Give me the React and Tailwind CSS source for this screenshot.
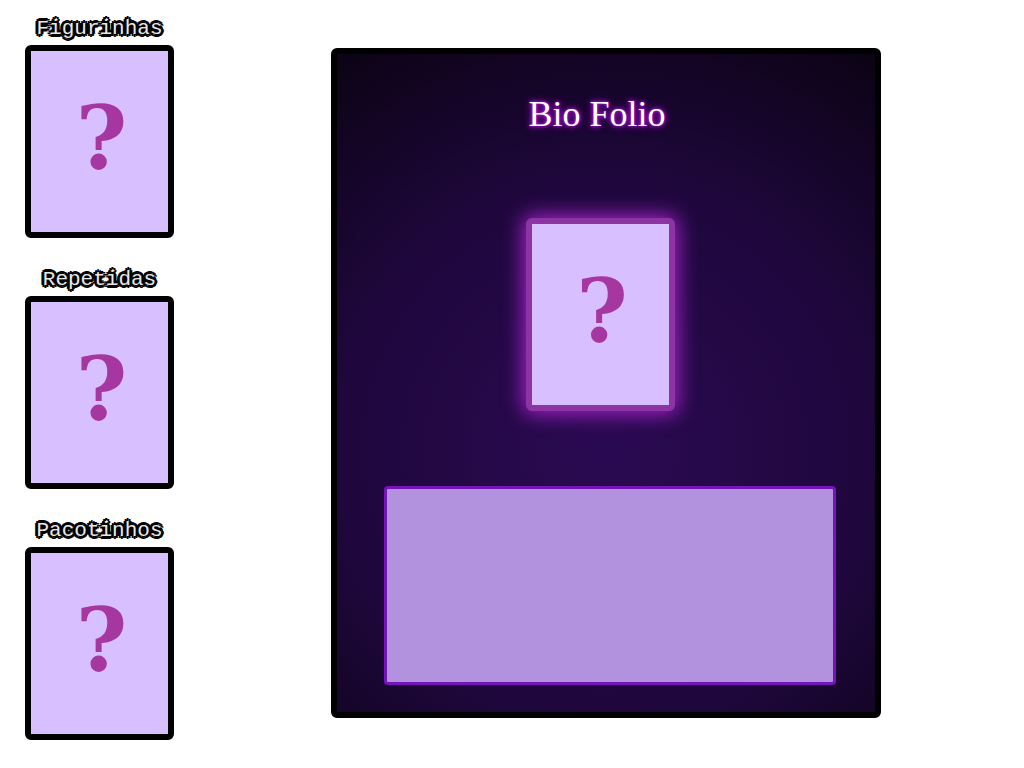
const stacks = ['Figurinhas', 'Repetidas', 'Pacotinhos'];

const cardBase =
  'flex h-[193px] w-[149px] items-center justify-center rounded-md border-[6px] bg-[#d8bfff]';

function Mark() {
  return (
    <span className="pb-2 pl-1 font-['DejaVu_Serif',serif] text-[88px] leading-none font-bold text-[#a637a0]">
      ?
    </span>
  );
}

function Stack({ name }) {
  const id = `stack-${name.toLowerCase()}`;
  return (
    <section className="flex flex-col items-center">
      <h2
        id={id}
        className="h-8 font-['Liberation_Mono',monospace] text-[21px] leading-8 text-[#e8e8e8] [text-shadow:0_3px_0_#000,0_-3px_0_#000,3px_0_0_#000,-3px_0_0_#000,2px_2px_0_#000,-2px_2px_0_#000,2px_-2px_0_#000,-2px_-2px_0_#000,1px_1px_0_#000,-1px_-1px_0_#000]"
      >
        {name}
      </h2>
      <button type="button" aria-labelledby={id} className={`${cardBase} border-black`}>
        <Mark />
      </button>
    </section>
  );
}

export default function App() {
  return (
    <div className="flex min-h-screen bg-white pl-[25px]">
      <aside className="flex shrink-0 flex-col gap-[26px] pt-[13px] pb-6">
        {stacks.map((name) => (
          <Stack key={name} name={name} />
        ))}
      </aside>

      <main className="flex flex-1 items-start justify-center pt-12 pb-12 pl-3.5">
        <article className="w-full max-w-[550px] rounded-md border-[6px] border-black bg-[radial-gradient(circle_at_50%_60%,#2a0a52_0%,#1f073d_55%,#0c0314_100%)] pt-8 pr-[39px] pb-[27px] pl-[47px]">
          <div className="flex flex-col items-center pr-5">
            <h1 className="h-14 pr-1.5 font-['Liberation_Serif',serif] text-4xl leading-14 text-white [text-shadow:0_0_3px_#b010d8,0_0_5px_#b010d8,0_0_8px_#8a10b8]">
              Bio Folio
            </h1>
            <button
              type="button"
              aria-label="Figurinha"
              className={`${cardBase} mt-19 border-[#8c34a4] shadow-[0_0_20px_3px_#a322c8]`}
            >
              <Mark />
            </button>
          </div>
          <textarea
            aria-label="Bio"
            className="mt-[75px] block h-[199px] w-full resize-none rounded border-[3px] border-[#7514b8] bg-[#b292df] p-3 font-['Liberation_Serif',serif] text-base text-[#1f073d] outline-none"
          />
        </article>
      </main>
    </div>
  );
}
